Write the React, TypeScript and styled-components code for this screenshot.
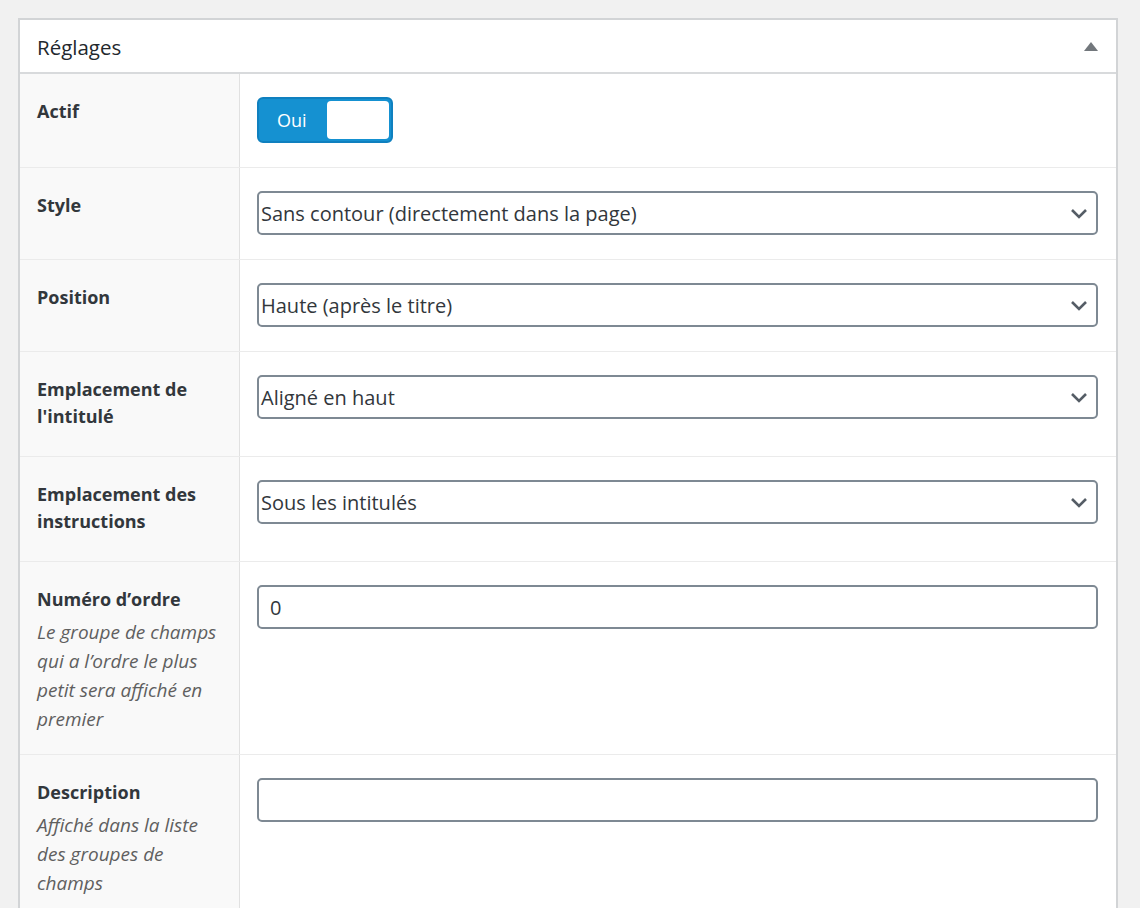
import styled, { createGlobalStyle } from 'styled-components'

const GlobalStyle = createGlobalStyle`
  body {
    margin: 0;
    background: #f1f1f1;
    font-family: 'Open Sans', 'Noto Sans', sans-serif;
    color: #32373c;
  }
`

const Page = styled.div`
  padding: 18px 22px 0 18px;
`

const Panel = styled.div`
  background: #fff;
  border: 2px solid #d2d4d6;
  border-bottom: none;
`

const Header = styled.div`
  height: 54px;
  display: flex;
  align-items: center;
  justify-content: space-between;
  padding: 1px 18px 0 17px;
  box-sizing: border-box;
  border-bottom: 2px solid #d8dadc;
`

const Title = styled.h2`
  margin: 0;
  font-size: 20.5px;
  font-weight: 400;
  color: #23282d;
`

const Row = styled.div<{ $first?: boolean }>`
  display: grid;
  grid-template-columns: 220px 1fr;
  border-top: ${(p) => (p.$first ? 'none' : '1px solid #ebebeb')};
`

const LabelCell = styled.div`
  background: #f9f9f9;
  border-right: 1px solid #e1e1e1;
  padding: 24px 18px 26px 17px;
`

const Label = styled.div`
  font-size: 18px;
  font-weight: 700;
  line-height: 27px;
  color: #32373c;
`

const Description = styled.p`
  margin: 5px 0 -6px;
  font-size: 19px;
  font-style: italic;
  line-height: 29px;
  color: #5f5f5f;
`

const ValueCell = styled.div`
  padding: 23px 18px 24px 17px;
`

const Switch = styled.div`
  width: 136px;
  height: 46px;
  box-sizing: border-box;
  background: #1591d1;
  border: 2px solid #0f80bf;
  border-radius: 6px;
  display: flex;
  align-items: center;
  justify-content: space-between;
  padding: 0 2px 0 18px;
`

const SwitchText = styled.span`
  color: #fff;
  font-size: 18px;
`

const Knob = styled.div`
  width: 62px;
  height: 38px;
  background: #fff;
  border-radius: 4px;
`

const SelectBox = styled.div`
  height: 44px;
  box-sizing: border-box;
  border: 2px solid #7e8993;
  border-radius: 5px;
  display: flex;
  align-items: center;
  justify-content: space-between;
  padding: 0 8px 0 2px;
  font-size: 20px;
  color: #32373c;
`

const TextInput = styled.div`
  height: 44px;
  box-sizing: border-box;
  border: 2px solid #7e8993;
  border-radius: 5px;
  display: flex;
  align-items: center;
  padding: 0 11px;
  font-size: 20px;
  color: #32373c;
`

const Chevron = () => (
  <svg width="18" height="11" viewBox="0 0 18 11">
    <path d="M2 2 L9 9 L16 2" fill="none" stroke="#555d66" strokeWidth="2.6" />
  </svg>
)

const Caret = () => (
  <svg width="14" height="9" viewBox="0 0 14 9">
    <path d="M7 0 L14 9 L0 9 Z" fill="#72777c" />
  </svg>
)

const selects = [
  { label: ['Style'], value: 'Sans contour (directement dans la page)' },
  { label: ['Position'], value: 'Haute (après le titre)' },
  { label: ['Emplacement de', "l'intitulé"], value: 'Aligné en haut' },
  { label: ['Emplacement des', 'instructions'], value: 'Sous les intitulés' },
]

export default function App() {
  return (
    <>
      <GlobalStyle />
      <Page>
        <Panel>
          <Header>
            <Title>Réglages</Title>
            <Caret />
          </Header>
          <Row $first>
            <LabelCell>
              <Label>Actif</Label>
            </LabelCell>
            <ValueCell>
              <Switch>
                <SwitchText>Oui</SwitchText>
                <Knob />
              </Switch>
            </ValueCell>
          </Row>
          {selects.map((s) => (
            <Row key={s.value}>
              <LabelCell>
                {s.label.map((l) => (
                  <Label key={l}>{l}</Label>
                ))}
              </LabelCell>
              <ValueCell>
                <SelectBox>
                  <span>{s.value}</span>
                  <Chevron />
                </SelectBox>
              </ValueCell>
            </Row>
          ))}
          <Row>
            <LabelCell>
              <Label>Numéro d’ordre</Label>
              <Description>
                Le groupe de champs qui a l’ordre le plus petit sera affiché en premier
              </Description>
            </LabelCell>
            <ValueCell>
              <TextInput>0</TextInput>
            </ValueCell>
          </Row>
          <Row>
            <LabelCell>
              <Label>Description</Label>
              <Description>Affiché dans la liste des groupes de champs</Description>
            </LabelCell>
            <ValueCell>
              <TextInput />
            </ValueCell>
          </Row>
        </Panel>
      </Page>
    </>
  )
}
